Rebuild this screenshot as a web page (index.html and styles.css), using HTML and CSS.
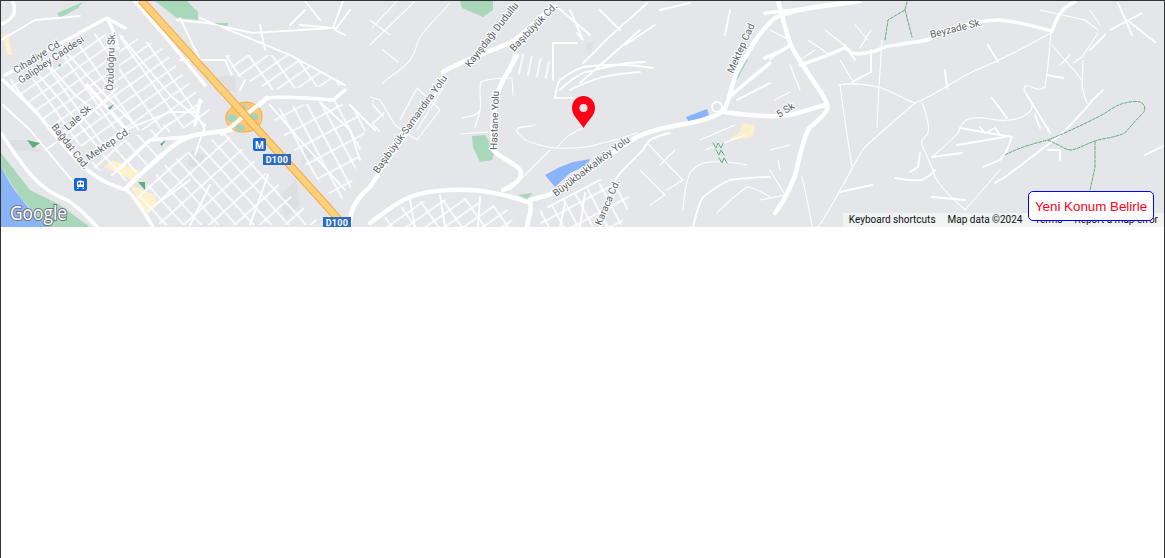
FILE: index.html
```html
<!DOCTYPE html>
<html lang="tr">
<head>
<meta charset="utf-8">
<title>Konum</title>
<link rel="stylesheet" href="styles.css">
</head>
<body>
<main class="frame">
  <section class="map">
    <svg class="map-art" viewBox="1 1 1163 226" width="1163" height="226" aria-hidden="true">
      <defs>
        <pattern id="gridA" width="19" height="11" patternUnits="userSpaceOnUse" patternTransform="rotate(-35)">
          <path class="grid-line" d="M0 1H19M1 0V11"/>
        </pattern>
        <pattern id="gridB" width="17" height="13" patternUnits="userSpaceOnUse" patternTransform="rotate(48)">
          <path class="grid-line" d="M0 1H17M1 0V13"/>
        </pattern>
        <pattern id="gridC" width="13" height="18" patternUnits="userSpaceOnUse" patternTransform="rotate(-28)">
          <path class="grid-line" d="M0 1H13M1 0V18"/>
        </pattern>
        <pattern id="gridD" width="9" height="26" patternUnits="userSpaceOnUse" patternTransform="rotate(12)">
          <path class="grid-line" d="M1 0V26"/>
        </pattern>
      </defs>

      <!-- land use -->
      <path class="park" d="M155 1H187L198 12V20L177 18ZM203 23H228L227 29ZM57 13L83 2L78 8L60 18ZM472 136L485 135L495 150L492 160L480 162L473 147ZM460 1H493V10L483 17L462 8ZM518 195L533 193L527 199ZM733 77L747 57L748 60L737 80Z"/>
      <path class="park" d="M1 153L30 190L60 205L90 227H50L38 217L20 197L1 167Z"/>
      <path class="water" d="M1 167C8 180 14 190 20 197C26 205 32 212 38 217L50 227H1ZM545 175L560 167L573 162L590 159L587 165L570 173L555 187ZM686 117L707 109L709 115L690 124Z"/>
      <path class="sand" d="M104 167L113 160L143 172L133 180ZM130 185L155 195L157 205L145 215ZM730 138L740 133L742 123L755 125L753 137L733 140ZM3 35L8 33L12 55L7 55Z"/>
      <path class="block" d="M190 150L205 155L200 170L188 165ZM280 195L296 180L300 205L285 218ZM305 145L315 155L300 168ZM215 77L235 75L236 92L222 90ZM585 45L595 40L590 55ZM1 140H30L40 152L15 150Z"/>

      <!-- street grids -->
      <path class="grid-a" d="M5 82L105 28L118 88L60 140L30 108Z"/>
      <path class="grid-a" d="M120 35L160 45L210 110L190 128L140 130L100 150L60 142L118 90Z"/>
      <path class="grid-b" d="M165 165L225 132L268 175L322 225H160L135 200Z"/>
      <path class="grid-b" d="M88 165L125 140L175 120L160 155L125 182Z"/>
      <path class="grid-c" d="M268 110L335 100L368 120L350 190L338 205L290 145Z"/>
      <path class="grid-a" d="M225 55L290 55L345 85L270 90L235 75Z"/>
      <path class="grid-d" d="M512 50L553 62L553 80L505 72Z"/>
      <path class="grid-b" d="M372 100L385 100L383 130L372 135Z"/>
      <path class="grid-a" d="M380 220L410 202L470 198L515 212L510 227H380Z"/>
      <path class="grid-c" d="M540 210L610 178L632 200L620 227H540Z"/>

      <!-- minor streets -->
      <g class="thin">
        <path d="M383 83C395 72 405 68 410 60C418 50 415 42 423 33C432 22 442 12 450 3M370 20L390 35M415 1L370 45M397 1L372 28M383 50L398 62"/>
        <path d="M370 97L380 100L395 125L417 140L440 110L417 88L400 120M417 130L443 88M462 118C472 116 478 115 480 110C482 100 478 90 481 82C490 78 503 78 512 78L513 95M480 110L475 128M460 134L487 132M510 190L550 150"/>
        <path d="M557 148C562 140 570 133 583 128M517 132C522 138 528 142 533 143C542 146 550 148 557 148C575 149 590 147 603 143C615 140 627 136 637 133M517 132C515 125 528 128 535 125"/>
        <path d="M647 143L683 180L667 190M683 210C684 195 686 182 690 173C694 167 698 165 703 163C720 160 735 163 747 165M717 213C725 205 735 195 747 187C755 188 762 192 770 197M660 165L675 150M640 170L665 195L650 205M700 140L735 125M705 150L745 135"/>
        <path d="M770 30L790 40M770 60L782 50M790 65L800 90M775 100L790 92M800 60L815 50M770 150L790 145M770 170L785 195L760 200M778 160L780 170"/>
        <path d="M852 80L840 60M825 30L850 50M855 25L868 40M871 30L860 48M808 40L830 55"/>
        <path d="M838 85C850 83 865 84 878 87C895 92 905 100 915 103C935 95 955 80 972 72C1000 60 1030 45 1052 32"/>
        <path d="M915 103C895 120 878 135 865 147C855 160 848 178 840 190C832 205 825 218 818 227"/>
        <path d="M840 85C843 110 848 140 852 167"/>
        <path d="M922 103C926 113 930 125 928 133C925 138 920 140 922 145C926 155 932 165 935 177C942 190 955 200 965 210"/>
        <path d="M1051 33C1049 55 1048 70 1045 87C1036 95 1025 78 1024 90C1030 100 1035 105 1030 112C1022 118 1015 120 1008 120C995 122 985 116 972 118C962 120 960 128 958 133C950 142 940 150 932 157"/>
        <path d="M1052 45C1062 58 1075 70 1082 80C1082 90 1085 98 1087 103M882 40C880 70 878 100 877 127M802 177C806 195 810 212 812 227"/>
        <path d="M1083 60L1082 90M1098 33L1082 57L1073 63M1040 10L1085 20L1098 30M1090 10L1100 25M965 210L1000 170M1070 55L1060 65"/>
      </g>
      <g class="mid">
        <path d="M553 80L553 43L577 43M555 98H573M555 98C556 90 557 84 560 80C568 74 575 70 583 67C605 64 630 64 653 68M560 90C568 82 575 77 583 73C600 68 615 65 627 63L645 62M570 90C582 84 592 80 603 77C615 74 628 73 640 72M580 83C600 65 620 48 640 30M583 63C595 52 605 40 617 30C628 20 638 12 647 3M577 33L583 40L570 10M600 10L620 30M555 5L590 35M625 45L655 25M660 10L690 3M725 35L730 10"/>
        <path d="M600 227C605 210 610 192 617 177C625 167 635 158 643 150C645 146 647 143 650 140C658 136 664 134 670 133"/>
        <path d="M871 50V72L852 82M845 45L855 60M992 98L1007 118M1027 95L1050 133L1048 128M945 70L947 88M988 45L998 62M1047 75L1063 78M1110 30L1142 13M1118 3L1132 35M1127 20L1155 42M1145 155L1165 145M960 128L1012 137M957 145L1005 137M1012 137C1008 148 1005 155 1000 160L983 167M932 157L962 153M920 153L918 167L910 172M895 178C905 180 915 181 922 180C928 177 932 174 935 170M932 197L965 200M840 192L872 185M1005 155L1012 137"/>
        <path d="M1103 90C1097 95 1092 100 1087 107C1078 117 1068 128 1058 137C1040 150 1022 165 1005 177L995 183M1048 150L1060 150L1060 160M1035 115L1040 128M980 127L985 133L995 128L1000 135M1090 50L1105 35"/>
        <path d="M693 227C696 215 698 205 703 197C712 190 720 184 730 180C745 178 758 177 770 177M732 95C745 83 758 73 770 63M737 100L770 83"/>
        <path d="M3 105L30 130L55 160L80 190M30 65L60 100L100 150M40 55L75 95L100 115M60 45L100 90L135 125M120 35L170 95L205 125M117 88L100 105L60 140L45 150M105 150L130 128L170 112L195 112L205 130M205 125L195 155M180 60L225 60M225 60L232 75M300 25L335 28M305 10L290 25M350 10L335 30L345 35M1 40L35 20L80 16"/>
        <path d="M177 20L207 23L253 33L333 28L343 1M320 20L305 1M200 18L290 55L345 85M180 18L200 60M245 80L240 90M260 25L265 50M190 55L215 85M268 175L250 225M210 185L190 225M155 205L190 180M270 105L300 140L345 190M320 102L350 130L360 160M350 105L375 130"/>
        <path d="M410 200L415 227M440 195L445 227M480 197L478 227M548 207L600 180M560 227L565 203M580 227L585 193"/>
      </g>
      <path class="road-narrow" d="M378 175L447 78"/>

      <!-- main streets -->
      <g class="road">
        <path d="M13 2C17 12 13 20 1 24M3 80C15 92 30 105 37 113C55 135 70 155 87 170C100 180 115 187 127 190C138 200 145 215 153 227"/>
        <path d="M5 75C35 58 75 35 107 18L125 28M107 18L113 30L118 48M1 133C12 150 22 165 33 177C45 190 55 195 67 200C78 207 88 217 97 227"/>
        <path d="M135 1L160 30L205 85M87 85L125 128L110 145M120 168L150 140L187 137M200 100L195 125"/>
        <path d="M267 98C285 96 310 98 333 100L345 90"/>
        <path d="M765 13C795 10 830 6 858 2M765 58C775 54 785 50 790 45M732 95C745 83 758 73 770 63"/>
      </g>
      <g class="road-wide">
        <path d="M127 187C140 175 150 165 160 157C172 146 182 138 195 135L230 130C242 124 255 108 267 98"/>
        <path d="M350 222C350 208 360 195 370 187L378 175"/>
        <path d="M443 72C460 62 500 47 510 43C525 33 540 18 552 6"/>
        <path d="M517 55C510 70 498 85 496 100C493 115 492 135 493 150C500 158 515 163 520 170C524 178 515 185 503 190"/>
        <path d="M370 223C385 212 395 203 410 197C425 191 450 189 470 190C490 191 515 197 530 203C533 210 528 218 527 227"/>
        <path d="M530 200C540 197 552 196 565 187C590 170 615 150 637 137C655 128 675 126 690 123C705 120 718 115 724 110C732 95 730 85 738 70C748 52 760 30 775 18C795 8 830 5 860 1"/>
        <path d="M724 112C745 115 770 118 790 115C800 113 815 107 826 105"/>
        <path d="M778 1C782 15 786 32 790 43C795 55 803 65 808 73C815 85 825 95 828 107C825 118 810 125 808 130C802 145 800 155 798 163C795 180 785 200 775 213"/>
      </g>
      <path class="road" d="M800 65C815 60 832 54 842 49C847 45 848 52 852 53C860 55 875 52 882 48C892 44 895 46 902 44C912 42 922 42 930 39C940 34 950 30 958 27C975 22 985 20 998 20C1015 20 1035 27 1052 31C1056 20 1060 8 1075 2"/>
      <circle class="mid" cx="717" cy="107" r="5"/>

      <!-- interchange and motorway -->
      <path class="clover" d="M226 115C229 107 238 102 247 102C257 103 263 110 262 118C261 127 254 132 244 132C234 133 224 125 226 115Z"/>
      <ellipse class="clover-green" cx="232" cy="118" rx="5" ry="4"/>
      <ellipse class="clover-green" cx="243" cy="108.500" rx="3.500" ry="4"/>
      <ellipse class="clover-green" cx="253" cy="117" rx="5.500" ry="4"/>
      <ellipse class="clover-green" cx="240" cy="128" rx="5" ry="3.500"/>
      <path class="cross-road" d="M222 134L267 98"/>
      <path class="motorway-edge" d="M141 0L333 213L345 227"/>
      <path class="motorway" d="M141 0L333 213L345 227"/>

      <!-- small tree patches -->
      <path class="park-dark" d="M27 140L40 143L33 148ZM138 182L145 182L145 190ZM160 144L166 140L162 146ZM108 108L114 104L110 110ZM58 65L61 64L60 67Z"/>
      <path class="zigzag" d="M713 143L716 148L718 143L721 148L723 143M716 150L719 155L721 150L724 155M719 158L722 163L724 158L727 163"/>

      <!-- trails -->
      <g class="trail">
        <path d="M1005 155C1018 148 1035 143 1048 140C1065 133 1082 125 1098 117C1108 112 1115 105 1125 103C1132 101 1140 101 1142 103C1146 106 1145 112 1143 113C1136 120 1130 127 1125 133C1116 137 1107 138 1098 140C1088 143 1080 148 1072 150C1068 150 1065 149 1062 147C1057 144 1052 142 1048 140"/>
        <path d="M1095 142V167L1090 190"/>
        <path d="M907 2L905 10L888 20L885 40M905 10L912 37"/>
      </g>

      <!-- pin -->
      <path class="pin" d="M583.500 96C590 96 595 101 595 108C595 116 588 120 583.500 128C579 120 572 116 572 108C572 101 577 96 583.500 96Z"/>
      <circle class="pin-hole" cx="583.500" cy="108" r="4"/>

      <!-- labels -->
      <g class="labels">
        <text transform="translate(16 74) rotate(-32)">Cihadiye Cd.</text>
        <text transform="translate(21 84) rotate(-34)">Galipbey Caddesi</text>
        <text transform="translate(113 91) rotate(-88)">Özüdoğru Sk.</text>
        <text transform="translate(68 131) rotate(-42)">Lale Sk.</text>
        <text transform="translate(89 161) rotate(-34)">Mektep Cd.</text>
        <text transform="translate(51 127) rotate(52)">Bağdat Cad.</text>
        <text transform="translate(378 174) rotate(-54)">Başıbüyük-Samandıra Yolu</text>
        <text transform="translate(470 68) rotate(-52)">Kayışdağı Dudullu</text>
        <text transform="translate(514 52) rotate(-46)">Başıbüyük Cd.</text>
        <text transform="translate(497 150) rotate(-88)">Hastane Yolu</text>
        <text transform="translate(556 197) rotate(-37)">Büyükbakkalköy Yolu</text>
        <text transform="translate(601 226) rotate(-67)">Karaca Cd.</text>
        <text transform="translate(733 74) rotate(-66)">Mektep Cad</text>
        <text transform="translate(779 118) rotate(-32)">5 Sk</text>
        <text transform="translate(931 38) rotate(-14)">Beyzade Sk.</text>
      </g>

      <!-- transit badges and shields -->
      <rect class="badge" x="253" y="138" width="13" height="13" rx="2"/>
      <text class="badge-m" x="259.500" y="148.500">M</text>
      <rect class="shield" x="263" y="154" width="28" height="11"/>
      <text class="shield-text" x="277" y="163">D100</text>
      <rect class="shield" x="323" y="217" width="28" height="11"/>
      <text class="shield-text" x="337" y="226">D100</text>
      <rect class="badge" x="74" y="178" width="13" height="13" rx="2"/>
      <path class="train" fill-rule="evenodd" d="M77 181.500Q80.500 179.500 84 181.500V187H77ZM78 182.500V184.500H80V182.500ZM81 182.500V184.500H83V182.500ZM77.500 187.500H79L78 189H77ZM82 187.500H83.500L84 189H83Z"/>

      <text class="google" x="10" y="220" textLength="57" lengthAdjust="spacingAndGlyphs">Google</text>
    </svg>

    <div class="attribution">
      <span class="attr-item">Keyboard shortcuts</span>
      <span class="attr-item">Map data ©2024</span>
      <span class="attr-item">Terms</span>
      <span class="attr-item">Report a map error</span>
    </div>
    <button class="locate-button" type="button">Yeni Konum Belirle</button>
  </section>
</main>
</body>
</html>
```
FILE: styles.css
```css
html, body {
  margin: 0;
  height: 100%;
  overflow: hidden;
  background: #fff;
}

.frame {
  box-sizing: border-box;
  height: 570px;
  border: 1px solid #333;
}

.map {
  position: relative;
  height: 226px;
  overflow: hidden;
  background: #e5e6ea;
}

.map-art {
  display: block;
}

.park { fill: #a8d8b9; }
.park-dark { fill: #5fae78; }
.water { fill: #8ab4f8; }
.sand { fill: #fdf0cd; }
.block { fill: #dedfe3; }

.grid-line { fill: none; stroke: #fff; stroke-width: 1.6; }
.grid-a { fill: url(#gridA); }
.grid-b { fill: url(#gridB); }
.grid-c { fill: url(#gridC); }
.grid-d { fill: url(#gridD); }

.thin, .mid, .road, .road-wide, .road-narrow, .cross-road, .motorway, .motorway-edge, .trail, .zigzag {
  fill: none;
  stroke-linecap: round;
  stroke-linejoin: round;
}

.thin { stroke: #fff; stroke-width: 1.1; }
.mid { stroke: #fff; stroke-width: 1.8; }
.road-narrow { stroke: #fff; stroke-width: 2.5; }
.road { stroke: #fff; stroke-width: 3.5; }
.road-wide { stroke: #fff; stroke-width: 4.5; }
.cross-road { stroke: #fff; stroke-width: 4; }
.motorway-edge { stroke: #f7a940; stroke-width: 8; stroke-linecap: butt; }
.motorway { stroke: #fdd07c; stroke-width: 6; stroke-linecap: butt; }
.clover { fill: #fcc873; stroke: #f5a94a; stroke-width: 1; }
.clover-green { fill: #a5d3bb; }
.trail { stroke: #5fae78; stroke-width: 1; stroke-dasharray: 3 1.5; }
.zigzag { stroke: #5fae78; stroke-width: 1; }
.pin { fill: #ff0016; }
.pin-hole { fill: #e5e6ea; }

.labels text {
  font: 10px Roboto, sans-serif;
  fill: #5b5f65;
  stroke: #fff;
  stroke-width: 2px;
  paint-order: stroke;
}

.badge { fill: #1a66d6; }
.shield { fill: #2b6cc0; }
.badge-m {
  font: 700 10px Roboto, sans-serif;
  fill: #fff;
  text-anchor: middle;
}
.shield-text {
  font: 700 9px Roboto, sans-serif;
  fill: #fff;
  text-anchor: middle;
  letter-spacing: 0.3px;
}
.train { fill: #fff; }

.google {
  font: 400 20px "Open Sans", sans-serif;
  fill: #fff;
  stroke: #6f7580;
  stroke-width: 2.2px;
  paint-order: stroke;
}

.attribution {
  position: absolute;
  right: 0;
  bottom: 0;
  display: flex;
  height: 14px;
  background: rgba(245, 245, 245, 0.85);
  font: 10px/14px Roboto, sans-serif;
  color: #111;
}

.attr-item {
  padding: 0 6px;
  white-space: nowrap;
}

.locate-button {
  position: absolute;
  top: 190px;
  right: 10px;
  box-sizing: border-box;
  width: 126px;
  height: 30px;
  padding: 0;
  border: 1px solid #00f;
  border-radius: 5px;
  background: #fff;
  color: #ff0016;
  font: 13.333px "Liberation Sans", Arial, sans-serif;
}
```
